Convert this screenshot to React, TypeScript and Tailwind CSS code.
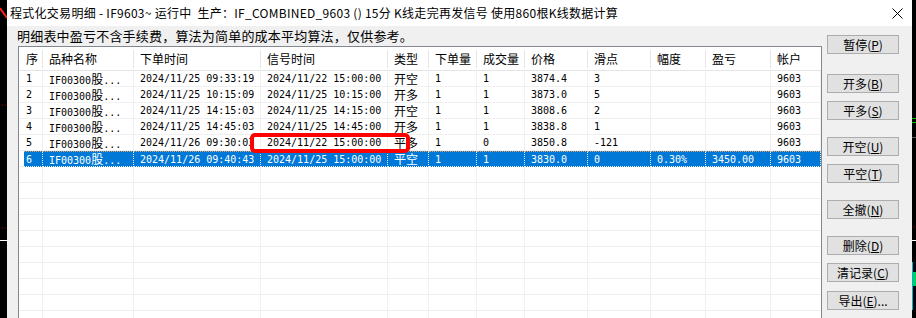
import React from 'react';

const COLS = [
  'w-[5px]', 'w-[19px]', 'w-[91px]', 'w-[127px]', 'w-[127px]', 'w-[41px]',
  'w-[48px]', 'w-[48px]', 'w-[63px]', 'w-[63px]', 'w-[55px]', 'w-[65px]', 'w-[50px]',
];

const HEADERS = ['序', '品种名称', '下单时间', '信号时间', '类型', '下单量', '成交量', '价格', '滑点', '幅度', '盈亏', '帐户'];

const ROWS = [
  ['1', '2024/11/25 09:33:19', '2024/11/22 15:00:00', '开空', '1', '1', '3874.4', '3', '', '', '9603'],
  ['2', '2024/11/25 10:15:09', '2024/11/25 10:15:00', '开多', '1', '1', '3873.0', '5', '', '', '9603'],
  ['3', '2024/11/25 14:15:03', '2024/11/25 14:15:00', '开空', '1', '1', '3808.6', '2', '', '', '9603'],
  ['4', '2024/11/25 14:45:03', '2024/11/25 14:45:00', '开多', '1', '1', '3838.8', '1', '', '', '9603'],
  ['5', '2024/11/26 09:30:03', '2024/11/22 15:00:00', '平多', '1', '0', '3850.8', '-121', '', '', '9603'],
  ['6', '2024/11/26 09:40:43', '2024/11/25 15:00:00', '平空', '1', '1', '3830.0', '0', '0.30%', '3450.00', '9603'],
];

const BUTTONS: [string, string, string, string][] = [
  ['暂停', 'P', '', 'mt-0'],
  ['开多', 'B', '', 'mt-[20px]'],
  ['平多', 'S', '', 'mt-[8px]'],
  ['开空', 'U', '', 'mt-[17px]'],
  ['平空', 'T', '', 'mt-[8px]'],
  ['全撤', 'N', '', 'mt-[17px]'],
  ['删除', 'D', '', 'mt-[17px]'],
  ['清记录', 'C', '', 'mt-[8px]'],
  ['导出', 'E', '...', 'mt-[9px]'],
];

const cjk = "font-['Noto_Sans_CJK_SC',sans-serif]";
const mono = "font-['DejaVu_Sans_Mono','Noto_Sans_CJK_SC',monospace]";

function Row({ cells, selected }: { cells: string[]; selected: boolean }) {
  const sel = selected ? 'bg-[#0078d7] text-white border-t border-dotted border-t-[#e8a060]' : 'text-black';
  return (
    <div className="flex h-[16px] shrink-0">
      <div className={`${COLS[0]} shrink-0 border-b border-[#f0f0f0]`} />
      {[cells[0], 'name', ...cells.slice(1)].map((c, i) => (
        <div
          key={i}
          className={`${COLS[i + 1]} shrink-0 h-[16px] flex items-center whitespace-nowrap overflow-hidden border-b border-r border-[#f0f0f0] ${sel} ${i === 0 ? 'pl-[2px]' : 'pl-[6px]'} ${mono} text-[10px]`}
        >
          {c === 'name' ? (
            <span>
              IF00300<span className={`${cjk} text-[12px]`}>股</span>...
            </span>
          ) : i === 4 ? (
            <span className={`${cjk} text-[12px]`}>{c}</span>
          ) : (
            c
          )}
        </div>
      ))}
    </div>
  );
}

function EmptyRow() {
  return (
    <div className="flex h-[16px] shrink-0">
      {COLS.map((w, i) => (
        <div key={i} className={`${w} shrink-0 h-[16px] border-b border-[#f0f0f0] ${i > 0 && i < COLS.length - 1 ? 'border-r' : ''}`} />
      ))}
    </div>
  );
}

export default function App() {
  return (
    <div className="relative w-[916px] h-[318px] bg-black flex overflow-hidden">
      {/* chart behind on the left */}
      <div className="relative w-[7px] shrink-0">
        <svg width="7" height="318" className="absolute left-0 top-0">
          <line x1="0" y1="8" x2="7" y2="18" stroke="#ff2020" strokeWidth="2" />
          <circle cx="2" cy="105" r="0.6" fill="#c00" />
          <circle cx="5" cy="105" r="0.6" fill="#c00" />
          <circle cx="2" cy="228" r="0.6" fill="#c00" />
          <circle cx="5" cy="228" r="0.6" fill="#c00" />
          <line x1="0" y1="240.5" x2="7" y2="240.5" stroke="#fff" strokeWidth="1" />
        </svg>
      </div>

      <div className="w-[905px] shrink-0 flex flex-col bg-[#f0f0f0]">
        <div className="h-[26px] shrink-0 bg-white flex items-center pl-[3px] pr-[9px]">
          <span className={`${cjk} text-[12px] tracking-[0.28px] text-black whitespace-nowrap`}>
            程式化交易明细 - IF9603~ 运行中&nbsp; 生产：IF_COMBINED_9603 () 15分 K线走完再发信号 使用860根K线数据计算
          </span>
          <svg width="11" height="11" viewBox="0 0 11 11" className="ml-auto mt-[1px]">
            <path d="M0.5 0.5L10.5 10.5M10.5 0.5L0.5 10.5" stroke="#000" strokeWidth="1" />
          </svg>
        </div>

        <div className="flex flex-1 min-h-0">
          <div className="flex flex-col w-[815px] shrink-0 pl-[11px]">
            <div className={`h-[20px] shrink-0 flex items-center ${cjk} text-[13px] tracking-[0.2px] text-black`}>
              <span className="ml-[-1px]">明细表中盈亏不含手续费，算法为简单的成本平均算法，仅供参考。</span>
            </div>
            <div className="flex-1 min-h-0 bg-white border-l border-t border-r border-[#828790] overflow-hidden flex flex-col">
              <div className="flex h-[24px] shrink-0 border-b border-[#e5e5e5]">
                <div className={`${COLS[0]} shrink-0`} />
                {HEADERS.map((h, i) => (
                  <div key={h} className={`${COLS[i + 1]} shrink-0 relative flex items-center ${i === 0 ? 'pl-[2px]' : 'pl-[6px]'} ${cjk} text-[12px] text-black whitespace-nowrap overflow-hidden`}>
                    {h}
                    {i < HEADERS.length - 1 && <div className="absolute right-0 top-[3px] bottom-[2px] w-px bg-[#e5e5e5]" />}
                  </div>
                ))}
              </div>
              {ROWS.map((r, i) => (
                <Row key={i} cells={r} selected={i === 5} />
              ))}
              {Array.from({ length: 10 }).map((_, i) => (
                <EmptyRow key={i} />
              ))}
            </div>
          </div>

          <div className="flex flex-col pt-[9px] pl-[5px]">
            {BUTTONS.map(([label, key, tail, mt]) => (
              <div
                key={label}
                className={`${mt} w-[72px] h-[19px] shrink-0 bg-[#e1e1e1] border border-[#adadad] flex items-center justify-center ${cjk} text-[12px] text-black whitespace-nowrap`}
              >
                {label}(<span className="underline">{key}</span>){tail}
              </div>
            ))}
          </div>
        </div>
      </div>

      {/* chart behind on the right */}
      <div className="relative flex-1">
        <svg width="4" height="318" className="absolute left-0 top-0">
          <line x1="0" y1="118.5" x2="4" y2="118.5" stroke="#00c000" strokeWidth="1" />
          <line x1="0" y1="122.5" x2="4" y2="122.5" stroke="#00c000" strokeWidth="1" />
          <line x1="0" y1="137.5" x2="4" y2="137.5" stroke="#555" strokeWidth="1" />
          <circle cx="2" cy="227" r="0.6" fill="#c00" />
          <line x1="0" y1="240.5" x2="4" y2="240.5" stroke="#fff" strokeWidth="1" />
          <line x1="0.5" y1="262" x2="0.5" y2="310" stroke="#00b0d0" strokeWidth="1" />
          <rect x="1" y="272" width="3" height="14" fill="#00d060" />
        </svg>
      </div>

      {/* red annotation box */}
      <div className="absolute left-[250px] top-[133px] w-[160px] h-[20px] border-[4px] border-[#ff0000] rounded-[5px]" />
    </div>
  );
}
